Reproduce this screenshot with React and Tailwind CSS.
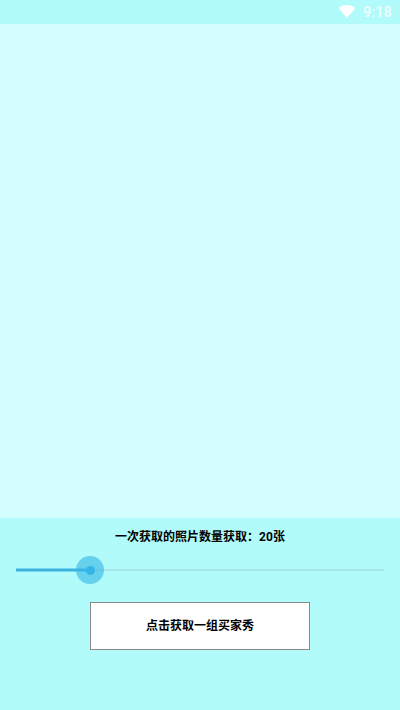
export default function App() {
  return (
    <div className="flex h-[710px] w-[400px] flex-col bg-[#b2fbfb] font-['Roboto','Noto_Sans_CJK_SC',sans-serif]">
      {/* status bar */}
      <div className="flex h-6 items-center justify-end pr-2 text-white/80">
        <svg width="18" height="13" viewBox="0 0 18 14" className="mr-[7px] -mt-[1px]">
          <path d="M0 3.2C2.4 1.2 5.5 0 9 0s6.6 1.2 9 3.2L9 14z" fill="#fff" />
        </svg>
        <span className="text-sm font-medium tracking-[0.3px]">9:18</span>
      </div>

      <div className="h-[494px] bg-[#d4fdfd]" />

      <div className="flex flex-1 flex-col items-center">
        <p className="mt-[11px] text-xs leading-4 font-bold text-black">一次获取的照片数量获取：20张</p>

        {/* slider */}
        <div className="mt-[9px] flex h-8 w-[400px] items-center px-4">
          <div className="h-[3px] w-[74px] -translate-y-[0.5px] bg-[#3ab2e0]" />
          <div className="z-10 -mx-[14px] flex h-7 w-7 shrink-0 items-center justify-center rounded-full bg-[#33b5e5]/60">
            <div className="h-[9px] w-[9px] rounded-full bg-[#33b5e5]" />
          </div>
          <div className="h-[2px] flex-1 bg-[#a6e6e8]" />
        </div>

        <button className="mt-4 h-12 w-[220px] border border-[#8a8a8a] bg-white text-xs font-bold text-black">
          点击获取一组买家秀
        </button>
      </div>
    </div>
  );
}
